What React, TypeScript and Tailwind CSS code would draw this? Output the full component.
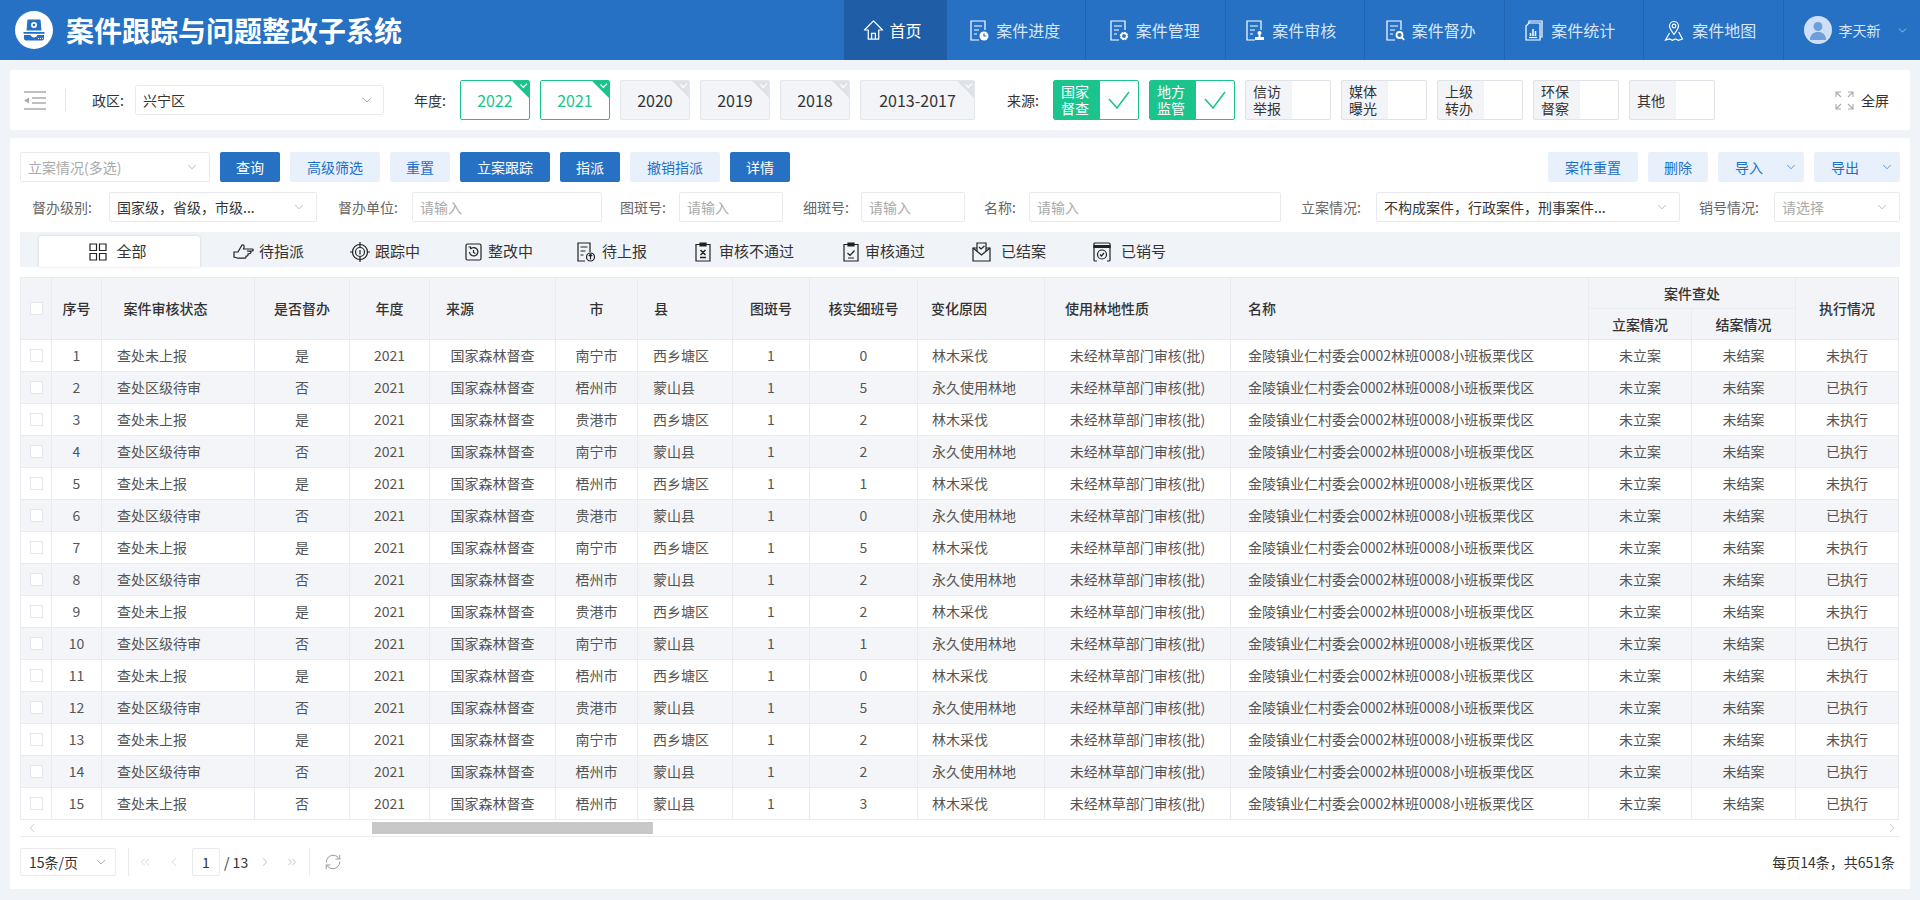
import { ChevronDown, ChevronLeft, ChevronRight, ChevronsLeft, ChevronsRight, RefreshCw } from "lucide-react";

const NAV_ITEMS = [
  { label: "案件进度", badge: "clock", box: "pr-[1px]" },
  { label: "案件管理", badge: "gear", box: "pr-[1px]" },
  { label: "案件审核", badge: "stamp", box: "pr-[7px]" },
  { label: "案件督办", badge: "search", box: "pr-[7px]" },
];

const YEARS = [
  { label: "2022", on: true, box: "w-[70px]" },
  { label: "2021", on: true, box: "w-[70px]" },
  { label: "2020", on: false, box: "w-[70px]" },
  { label: "2019", on: false, box: "w-[70px]" },
  { label: "2018", on: false, box: "w-[70px]" },
  { label: "2013-2017", on: false, box: "w-[115px]" },
];

const SOURCES = [
  { lines: ["国家", "督查"], on: true },
  { lines: ["地方", "监管"], on: true },
  { lines: ["信访", "举报"], on: false },
  { lines: ["媒体", "曝光"], on: false },
  { lines: ["上级", "转办"], on: false },
  { lines: ["环保", "督察"], on: false },
  { lines: ["其他"], on: false },
];

const ACTIONS = [
  { label: "查询", solid: true, box: "w-[60px]" },
  { label: "高级筛选", solid: false, box: "w-[90px]" },
  { label: "重置", solid: false, box: "w-[60px]" },
  { label: "立案跟踪", solid: true, box: "w-[90px]" },
  { label: "指派", solid: true, box: "w-[60px]" },
  { label: "撤销指派", solid: false, box: "w-[90px]" },
  { label: "详情", solid: true, box: "w-[60px]" },
];

const CITIES = ["南宁市", "梧州市", "贵港市"];
const SPOTS = [0, 5, 2, 2, 1, 0, 5, 2, 2, 1, 0, 5, 2, 2, 3];

const ROWS = SPOTS.map((spot, i) => {
  const odd = i % 2 === 0;
  const last = i === 14;
  return {
    no: i + 1,
    status: odd ? "查处未上报" : "查处区级待审",
    urged: odd && !last ? "是" : "否",
    city: last ? "梧州市" : CITIES[i % 3],
    county: odd && !last ? "西乡塘区" : "蒙山县",
    spot,
    reason: odd ? "林木采伐" : "永久使用林地",
    run: odd && !last ? "未执行" : "已执行",
  };
});

const COLS = [
  "w-[31px]", "w-[50px]", "w-[153px]", "w-[95px]", "w-[80px]", "w-[126px]", "w-[82px]", "w-[95px]",
  "w-[77px]", "w-[108px]", "w-[127px]", "w-[186px]", "w-[358px]", "w-[103px]", "w-[104px]", "w-[103px]",
];

const th = "border-r border-b border-[#e8ebef] font-medium text-[#333] text-center p-0";
const td = "border-r border-b border-[#e8ebef] text-center p-0 whitespace-nowrap";

const DocIcon = ({ badge }: { badge: string }) => (
  <svg viewBox="0 0 19 21" className="w-[19px] h-[21px] shrink-0" fill="none" stroke="currentColor" strokeWidth="1.2">
    <path d="M9 20H1V1h14v9" />
    <path d="M4 6h8M4 10h5M4 14h3" />
    {badge === "clock" && <g><circle cx="14" cy="16" r="4.5" fill="currentColor" stroke="none" /><path d="M14 13.5V16h2.2" stroke="#2671c4" /></g>}
    {badge === "gear" && <g><circle cx="14" cy="16" r="3" strokeWidth="2.4" strokeDasharray="1.6 .7" /><circle cx="14" cy="16" r="2.8" strokeWidth="1.2" /></g>}
    {badge === "stamp" && <g fill="currentColor" stroke="none"><circle cx="13.5" cy="13" r="2" /><path d="M12.8 14h1.4l.4 3h3.4v3H9v-3h3.4z" /></g>}
    {badge === "search" && <g strokeWidth="1.8"><circle cx="13.5" cy="15" r="3" /><path d="M15.6 17.2l2.6 2.6" /></g>}
  </svg>
);

const HomeIcon = () => (
  <svg viewBox="0 0 22 22" className="w-[21px] h-[22px] shrink-0" fill="none" stroke="currentColor" strokeWidth="1.3">
    <path d="M11 1.5L1.5 11H5.5V20.5H16.5V11H20.5Z" strokeLinejoin="round" />
    <path d="M9 20.5V14.5H13V20.5" />
  </svg>
);

const StatsIcon = () => (
  <svg viewBox="0 0 18 21" className="w-[18px] h-[21px] shrink-0" fill="none" stroke="currentColor" strokeWidth="1.2">
    <path d="M4 3V1h13v16h-2" />
    <path d="M1 6l3-3h11v17H1z" />
    <path d="M5.5 16v-3M8 16V9M10.5 16v-5" strokeWidth="1.5" />
    <path d="M4 17.5h8" />
  </svg>
);

const MapIcon = () => (
  <svg viewBox="0 0 20 21" className="w-[20px] h-[21px] shrink-0" fill="none" stroke="currentColor" strokeWidth="1.2">
    <path d="M10 14.5C7 10.500 5.500 8.500 5.500 6a4.500 4.500 0 0 1 9 0c0 2.500-1.500 4.500-4.500 8.500z" />
    <circle cx="10" cy="6" r="1.800" />
    <path d="M5.500 13L1.500 20l4-1 3 1.300 3-1.300 3 1.300 4-1.300-3.800-7" />
  </svg>
);

const Logo = () => (
  <div className="w-[38px] h-[38px] rounded-full bg-white flex items-center justify-center shrink-0">
    <svg viewBox="0 0 24 24" className="w-[24px] h-[24px]">
      <path d="M5.500 1.500h13l1 11h-15z" fill="#2671c4" />
      <circle cx="12" cy="7" r="3" fill="#fff" />
      <circle cx="12" cy="7" r="1.300" fill="#2671c4" />
      <path d="M1.500 14h21v1.800h-21z" fill="#2671c4" />
      <path d="M2 17h6.500c.5 1.600 1.800 2.400 3.500 2.400s3-.8 3.500-2.400H22v3.500a2 2 0 0 1-2 2H4a2 2 0 0 1-2-2z" fill="#2671c4" />
      <path d="M16 20.500h1M18 20.500h1M20 20.500h.8" stroke="#fff" strokeWidth="1" />
    </svg>
  </div>
);

const Header = () => (
  <header className="h-[60px] bg-[#2671c4] flex items-center text-white">
    <div className="ml-[15px] flex items-center">
      <Logo />
      <span className="ml-[13px] text-[28px] font-bold leading-none whitespace-nowrap">案件跟踪与问题整改子系统</span>
    </div>
    <nav className="ml-auto flex h-full text-[16px]">
      <a className="w-[103px] bg-[#1f5ea6] flex items-center justify-center gap-[5px] pr-[5px]">
        <HomeIcon />
        首页
      </a>
      {NAV_ITEMS.map((item) => (
        <a key={item.label} className={`w-[139.500px] border-r border-[#1f64b2] flex items-center justify-center gap-[7px] text-[#d7e6f7] ${item.box}`}>
          <span className="text-white"><DocIcon badge={item.badge} /></span>
          {item.label}
        </a>
      ))}
      <a className="w-[139.500px] border-r border-[#1f64b2] flex items-center justify-center gap-[8px] text-[#d7e6f7] pr-[7px]">
        <span className="text-white"><StatsIcon /></span>
        案件统计
      </a>
      <a className="w-[139.500px] border-r border-[#1f64b2] flex items-center justify-center gap-[8px] text-[#d7e6f7] pr-[6px]">
        <span className="text-white"><MapIcon /></span>
        案件地图
      </a>
      <div className="w-[136.500px] flex items-center pl-[20px] text-[14px] text-[#d7e6f7]">
        <div className="w-[28px] h-[28px] rounded-full bg-[#cfe0f6] overflow-hidden flex items-center justify-center">
          <svg viewBox="0 0 28 28" className="w-[28px] h-[28px]" fill="#6f9fdb">
            <circle cx="14" cy="10.500" r="4.500" />
            <path d="M6 24c0-5.500 3.500-8 8-8s8 2.500 8 8z" />
          </svg>
        </div>
        <span className="ml-[7px]">李天新</span>
        <ChevronDown size={13} strokeWidth={1.2} className="ml-[15px]" />
      </div>
    </nav>
  </header>
);

const Corner = ({ on }: { on: boolean }) => (
  <svg viewBox="0 0 17 17" className="absolute top-0 right-0 w-[17px] h-[17px]">
    <path d="M0 0h17v17z" fill={on ? "#1cc48d" : "#dfe2e7"} />
    <path d="M8.500 3.500l2.800 2.800 3.700-3.700" fill="none" stroke="#fff" strokeWidth="1.200" />
  </svg>
);

const FilterBar = () => (
  <section className="mx-[10px] mt-[10px] h-[60px] bg-white flex items-center text-[14px] text-[#333]">
    <svg viewBox="0 0 22 19" className="ml-[14px] w-[22px] h-[19px] shrink-0" fill="none" stroke="#aaa" strokeWidth="1.500">
      <path d="M0 1h22M8 7h14M8 12h14M0 18h22" />
      <path d="M0 9.500L5 6.500v6z" fill="#aaa" stroke="none" />
    </svg>
    <div className="ml-[19px] w-px h-[22px] bg-[#e3e6ea]" />
    <span className="ml-[26px] w-[43px] whitespace-nowrap">政区:</span>
    <div className="w-[249px] h-[30px] border border-[#e8eaee] rounded-[3px] flex items-center justify-between pl-[7px] pr-[8px]">
      兴宁区
      <ChevronDown size={16} strokeWidth={1} className="text-[#888]" />
    </div>
    <span className="ml-[30px] w-[46px] whitespace-nowrap">年度:</span>
    <div className="flex gap-[10px]">
      {YEARS.map((y) => (
        <div
          key={y.label}
          className={y.on
            ? `relative h-[40px] ${y.box} rounded-[2px] border border-[#1cc48d] bg-white text-[#1cc48d] flex items-center justify-center text-[16px]`
            : `relative h-[40px] ${y.box} rounded-[2px] border border-[#e3e6ea] bg-[#f2f4f8] flex items-center justify-center text-[16px]`}
        >
          {y.label}
          <Corner on={y.on} />
        </div>
      ))}
    </div>
    <span className="ml-[32px] w-[46px] whitespace-nowrap">来源:</span>
    <div className="flex gap-[10px]">
      {SOURCES.map((s) => (
        <div
          key={s.lines[0]}
          className={s.on
            ? "w-[86px] h-[40px] rounded-[2px] border border-[#1cc48d] flex overflow-hidden"
            : "w-[86px] h-[40px] rounded-[2px] border border-[#dfe2e7] flex overflow-hidden"}
        >
          <div className={s.on
            ? "w-[46px] bg-[#1cc48d] text-white flex flex-col justify-center pl-[7px] leading-[17px]"
            : "w-[46px] bg-[#f2f4f8] flex flex-col justify-center pl-[7px] leading-[17px]"}>
            {s.lines.map((line) => <span key={line}>{line}</span>)}
          </div>
          {s.on && (
            <div className="flex-1 flex items-center justify-center">
              <svg viewBox="0 0 24 20" className="w-[24px] h-[20px]" fill="none" stroke="#1cc48d" strokeWidth="1.600">
                <path d="M2 9l8 9L22 2" />
              </svg>
            </div>
          )}
        </div>
      ))}
    </div>
    <svg viewBox="0 0 19 19" className="ml-[120px] w-[19px] h-[19px]" fill="none" stroke="#aaa" strokeWidth="1.100">
      <path d="M1 6V1h5M1 1l5 5M18 6V1h-5M18 1l-5 5M1 13v5h5M1 18l5-5M18 13v5h-5M18 18l-5-5" />
    </svg>
    <span className="ml-[7px] whitespace-nowrap">全屏</span>
  </section>
);

const Btn = ({ label, solid, box }: { label: string; solid: boolean; box: string }) => (
  <button
    type="button"
    className={solid
      ? `${box} h-[30px] rounded-[2px] bg-[#2671c4] text-white text-[14px]`
      : `${box} h-[30px] rounded-[2px] bg-[#e8f1fb] text-[#1e6fc8] text-[14px]`}
  >
    {label}
  </button>
);

const DropBtn = ({ label }: { label: string }) => (
  <button type="button" className="w-[86px] h-[30px] rounded-[2px] bg-[#e8f1fb] text-[#1e6fc8] text-[14px] flex items-center pl-[17px]">
    {label}
    <ChevronDown size={14} strokeWidth={1.2} className="ml-[21px]" />
  </button>
);

const Input = ({ box, text = "请输入" }: { box: string; text?: string }) => (
  <div className={`${box} h-[30px] border border-[#e8eaee] rounded-[2px] flex items-center pl-[7px] text-[#aaa] shrink-0`}>{text}</div>
);

const Select = ({ box, text, dim }: { box: string; text: string; dim?: boolean }) => (
  <div className={`${box} h-[30px] border border-[#e8eaee] rounded-[2px] flex items-center justify-between pl-[7px] pr-[10px] shrink-0 ${dim ? "text-[#aaa]" : "text-[#333]"}`}>
    <span className="whitespace-nowrap">{text}</span>
    <ChevronDown size={14} strokeWidth={1} className="text-[#888]" />
  </div>
);

const Toolbar = () => (
  <>
    <div className="flex gap-[10px]">
      <Select box="w-[190px]" text="立案情况(多选)" dim />
      {ACTIONS.map((a) => <Btn key={a.label} {...a} />)}
      <div className="ml-auto flex gap-[10px]">
        <Btn label="案件重置" solid={false} box="w-[90px]" />
        <Btn label="删除" solid={false} box="w-[60px]" />
        <DropBtn label="导入" />
        <DropBtn label="导出" />
      </div>
    </div>
    <div className="mt-[10px] flex items-center text-[14px] text-[#666] whitespace-nowrap">
      <span className="ml-[12px] w-[77px] shrink-0">督办级别:</span>
      <Select box="w-[208px]" text="国家级，省级，市级..." />
      <span className="ml-[21px] w-[74px] shrink-0">督办单位:</span>
      <Input box="w-[190px]" />
      <span className="ml-[18px] w-[59px] shrink-0">图斑号:</span>
      <Input box="w-[104px]" />
      <span className="ml-[20px] w-[58px] shrink-0">细斑号:</span>
      <Input box="w-[104px]" />
      <span className="ml-[19px] w-[45px] shrink-0">名称:</span>
      <Input box="w-[252px]" />
      <span className="ml-[20px] w-[75px] shrink-0">立案情况:</span>
      <Select box="w-[304px]" text="不构成案件，行政案件，刑事案件..." />
      <span className="ml-[19px] w-[75px] shrink-0">销号情况:</span>
      <Select box="w-[126px]" text="请选择" dim />
    </div>
  </>
);

const TabSvg = ({ box, view, children }: { box: string; view: string; children: React.ReactNode }) => (
  <svg viewBox={view} className={`${box} shrink-0`} fill="none" stroke="#222" strokeWidth="1.200">{children}</svg>
);

const Tabs = () => (
  <div className="mt-[10px] h-[35px] bg-[#f0f3f7] flex items-end text-[15px] text-[#333] whitespace-nowrap">
    <div className="ml-[19px] w-[161px] h-[31px] bg-white rounded-t-[3px] shadow-[0_0_3px_rgba(0,0,0,0.15)] flex items-center justify-center gap-[9px] pr-[3px]">
      <TabSvg box="w-[18px] h-[18px]" view="0 0 18 18">
        <path d="M1 1h6.500v6.500H1zM10.500 1H17v6.500h-6.500zM1 10.500h6.500V17H1zM10.500 10.500H17V17h-6.500z" />
      </TabSvg>
      全部
    </div>
    <div className="ml-[33px] h-[31px] flex items-center">
      <div className="flex items-center gap-[5px]">
        <TabSvg box="w-[21px] h-[18px]" view="0 0 21 18">
          <path d="M1 9h4l4-7c1.500-.5 2.500.5 2 2.500L10.500 6H19.500c1 0 1 2-.3 2H14l3.500.5c.8.5.5 2-.5 2L15 11c.5 1-.5 2-1 2l-1 .2c.3 1-.5 2-1.500 2H5L1 14z" />
        </TabSvg>
        待指派
      </div>
      <div className="ml-[46px] flex items-center gap-[5px]">
        <TabSvg box="w-[20px] h-[20px]" view="0 0 20 20">
          <circle cx="10" cy="10" r="7.500" />
          <circle cx="10" cy="10" r="4.500" />
          <path d="M10 0v5M10 15v5M0 10h2.500M17.500 10H20M10 8v4.500" />
        </TabSvg>
        跟踪中
      </div>
      <div className="ml-[45px] flex items-center gap-[6px]">
        <TabSvg box="w-[17px] h-[18px]" view="0 0 17 18">
          <rect x="1" y="1" width="15" height="16" rx="1.500" />
          <path d="M5.500 6a4.200 4.200 0 1 1-1 3M8.500 7v2.500l1.800 1M3.500 4h2v2" />
        </TabSvg>
        整改中
      </div>
      <div className="ml-[44px] flex items-center gap-[6px]">
        <TabSvg box="w-[19px] h-[20px]" view="0 0 19 20">
          <path d="M8 19H1V1h12v9" />
          <path d="M3.500 5h7M3.500 9h5M3.500 13h3" />
          <circle cx="13.500" cy="15" r="4" />
          <path d="M13.500 17.500v-5M11.800 14l1.700-1.700 1.700 1.700" />
        </TabSvg>
        待上报
      </div>
      <div className="ml-[48px] flex items-center gap-[8px]">
        <TabSvg box="w-[16px] h-[20px]" view="0 0 16 20">
          <path d="M5 2.500H1V19h14V2.500h-4" />
          <path d="M5 1h6v3H5z" fill="#222" />
          <path d="M5.500 8l5 5M10.500 8l-5 5M5 15.500h6" strokeWidth="1.500" />
        </TabSvg>
        审核不通过
      </div>
      <div className="ml-[49px] flex items-center gap-[6px]">
        <TabSvg box="w-[16px] h-[20px]" view="0 0 16 20">
          <path d="M5 2.500H1V19h14V2.500h-4" />
          <path d="M5 1h6v3H5z" fill="#222" />
          <path d="M4.500 11l2.500 2.500 4.500-5M5 16h6" />
        </TabSvg>
        审核通过
      </div>
      <div className="ml-[47px] flex items-center gap-[10px]">
        <TabSvg box="w-[19px] h-[20px]" view="0 0 19 20">
          <path d="M5 6H1v13h17V6h-4" />
          <path d="M1 6l8.500 7L18 6" />
          <path d="M5 9V1h9v8M7 5l2 2 3.500-3" />
        </TabSvg>
        已结案
      </div>
      <div className="ml-[47px] flex items-center gap-[10px]">
        <TabSvg box="w-[18px] h-[20px]" view="0 0 18 20">
          <path d="M4 19H2a1 1 0 0 1-1-1V2a1 1 0 0 1 1-1h14a1 1 0 0 1 1 1v16a1 1 0 0 1-1 1h-2" />
          <path d="M1 3.500h16v2H1z" fill="#222" />
          <circle cx="9" cy="12.500" r="4.500" />
          <path d="M7 12.500l1.500 1.500 2.500-3" />
        </TabSvg>
        已销号
      </div>
    </div>
  </div>
);

const Check = () => <div className="mx-auto w-[13px] h-[13px] border border-[#e3e6ea] bg-white" />;

const CaseTable = () => (
  <div className="mt-[10px] w-[1880px] overflow-hidden border-b border-[#e8ebef]">
    <table className="table-fixed w-[1879px] border-collapse border-l border-t border-[#e8ebef] text-[14px] text-[#555]">
      <colgroup>
        {COLS.map((c, i) => <col key={i} className={c} />)}
      </colgroup>
      <thead className="bg-[#f2f4f8]">
        <tr className="h-[31px]">
          <th rowSpan={2} className={th}><Check /></th>
          <th rowSpan={2} className={th}>序号</th>
          <th rowSpan={2} className={`${th} pr-[25px]`}>案件审核状态</th>
          <th rowSpan={2} className={th}>是否督办</th>
          <th rowSpan={2} className={th}>年度</th>
          <th rowSpan={2} className={`${th} !text-left pl-[16px]`}>来源</th>
          <th rowSpan={2} className={th}>市</th>
          <th rowSpan={2} className={`${th} !text-left pl-[16px]`}>县</th>
          <th rowSpan={2} className={th}>图斑号</th>
          <th rowSpan={2} className={th}>核实细班号</th>
          <th rowSpan={2} className={`${th} pr-[44px]`}>变化原因</th>
          <th rowSpan={2} className={`${th} pr-[61px]`}>使用林地性质</th>
          <th rowSpan={2} className={`${th} !text-left pl-[17px]`}>名称</th>
          <th colSpan={2} className={th}>案件查处</th>
          <th rowSpan={2} className={th}>执行情况</th>
        </tr>
        <tr className="h-[31px]">
          <th className={th}>立案情况</th>
          <th className={th}>结案情况</th>
        </tr>
      </thead>
      <tbody>
        {ROWS.map((r) => (
          <tr key={r.no} className={r.no % 2 === 0 ? "h-[32px] bg-[#f3f5f9]" : "h-[32px] bg-white"}>
            <td className={td}><Check /></td>
            <td className={td}>{r.no}</td>
            <td className={`${td} !text-left pl-[15px]`}>{r.status}</td>
            <td className={td}>{r.urged}</td>
            <td className={td}>2021</td>
            <td className={td}>国家森林督查</td>
            <td className={td}>{r.city}</td>
            <td className={`${td} !text-left pl-[15px]`}>{r.county}</td>
            <td className={td}>1</td>
            <td className={td}>{r.spot}</td>
            <td className={`${td} !text-left pl-[14px]`}>{r.reason}</td>
            <td className={td}>未经林草部门审核(批)</td>
            <td className={`${td} !text-left pl-[17px]`}>金陵镇业仁村委会0002林班0008小班板栗伐区</td>
            <td className={td}>未立案</td>
            <td className={td}>未结案</td>
            <td className={td}>{r.run}</td>
          </tr>
        ))}
      </tbody>
    </table>
    <div className="h-[16px] flex items-center text-[#999]">
      <ChevronLeft size={14} strokeWidth={1} className="ml-[5px]" />
      <div className="ml-[333px] w-[281px] h-[12px] bg-[#c8c8c8]" />
      <ChevronRight size={14} strokeWidth={1} className="ml-auto mr-[1px]" />
    </div>
  </div>
);

const Pager = () => (
  <div className="mt-[11px] h-[28px] flex items-center text-[14px] text-[#333] whitespace-nowrap">
    <div className="w-[96px] h-[28px] border border-[#e8eaee] rounded-[2px] flex items-center justify-between pl-[8px] pr-[6px]">
      15条/页
      <ChevronDown size={16} strokeWidth={1} className="text-[#888]" />
    </div>
    <div className="ml-[12px] w-px h-[28px] bg-[#e8eaee]" />
    <ChevronsLeft size={14} strokeWidth={1} className="ml-[9px] text-[#bbb]" />
    <ChevronLeft size={14} strokeWidth={1} className="ml-[15px] text-[#bbb]" />
    <div className="ml-[11px] w-[28px] h-[28px] border border-[#e8eaee] rounded-[2px] flex items-center justify-center">1</div>
    <span className="ml-[4px]">/ 13</span>
    <ChevronRight size={14} strokeWidth={1} className="ml-[10px] text-[#999]" />
    <ChevronsRight size={14} strokeWidth={1} className="ml-[13px] text-[#999]" />
    <div className="ml-[10px] w-px h-[28px] bg-[#e8eaee]" />
    <RefreshCw size={18} strokeWidth={1.3} className="ml-[14px] text-[#999]" />
    <span className="ml-auto mr-[5px]">每页14条，共651条</span>
  </div>
);

export default function App() {
  return (
    <div className="h-[900px] overflow-hidden bg-[#f0f3f7] font-['Noto_Sans_CJK_SC','Noto_Sans',sans-serif]">
      <Header />
      <FilterBar />
      <main className="mx-[10px] mt-[8px] h-[751px] bg-white px-[10px] pt-[14px] text-[14px]">
        <Toolbar />
        <Tabs />
        <CaseTable />
        <Pager />
      </main>
    </div>
  );
}
